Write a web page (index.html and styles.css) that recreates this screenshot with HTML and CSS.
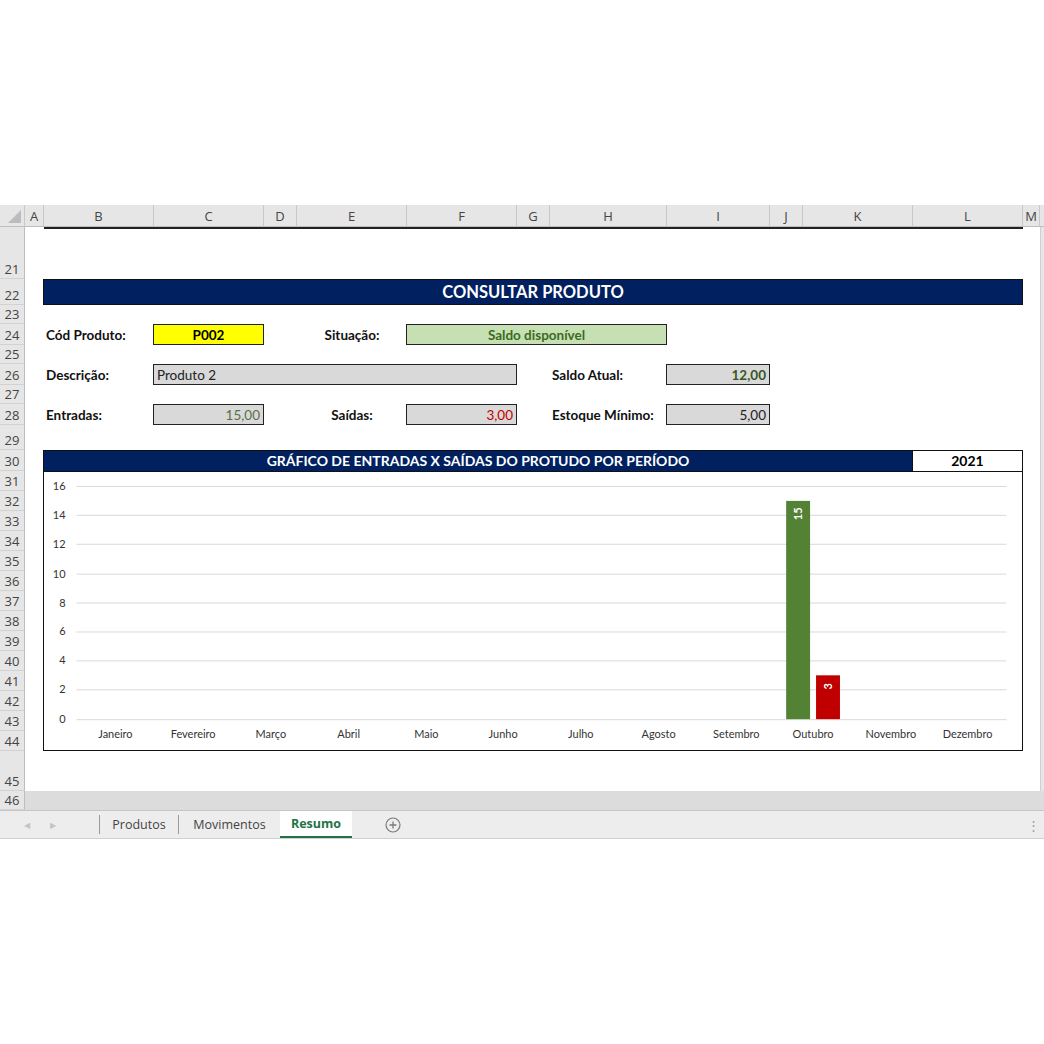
FILE: index.html
```html
<!DOCTYPE html>
<html lang="pt-BR">
<head>
    <meta charset="UTF-8">
    <title>Resumo - Controle de Estoque</title>
    <link rel="stylesheet" href="styles.css">
</head>
<body>

<div class="book">
    <div class="sheet">
        <div class="corner"><span class="corner-mark"></span></div>
        <div class="colhead">A</div>
        <div class="colhead">B</div>
        <div class="colhead">C</div>
        <div class="colhead">D</div>
        <div class="colhead">E</div>
        <div class="colhead">F</div>
        <div class="colhead">G</div>
        <div class="colhead">H</div>
        <div class="colhead">I</div>
        <div class="colhead">J</div>
        <div class="colhead">K</div>
        <div class="colhead">L</div>
        <div class="colhead">M</div>
        <div class="colhead scroll-end"></div>

        <div class="rowhead">21</div>
        <div class="rowhead">22</div>
        <div class="rowhead">23</div>
        <div class="rowhead">24</div>
        <div class="rowhead">25</div>
        <div class="rowhead">26</div>
        <div class="rowhead">27</div>
        <div class="rowhead">28</div>
        <div class="rowhead">29</div>
        <div class="rowhead">30</div>
        <div class="rowhead">31</div>
        <div class="rowhead">32</div>
        <div class="rowhead">33</div>
        <div class="rowhead">34</div>
        <div class="rowhead">35</div>
        <div class="rowhead">36</div>
        <div class="rowhead">37</div>
        <div class="rowhead">38</div>
        <div class="rowhead">39</div>
        <div class="rowhead">40</div>
        <div class="rowhead">41</div>
        <div class="rowhead">42</div>
        <div class="rowhead">43</div>
        <div class="rowhead">44</div>
        <div class="rowhead">45</div>
        <div class="rowhead">46</div>

        <!-- borda superior do bloco -->
        <div class="top-rule"></div>
        <div class="right-strip"></div>
        <div class="bottom-fill"></div>

        <div class="banner">CONSULTAR PRODUTO</div>

        <div class="label cod-label">Cód Produto:</div>
        <div class="field yellow cod-field">P002</div>
        <div class="label center situacao-label">Situação:</div>
        <div class="field status situacao-field">Saldo disponível</div>

        <div class="label desc-label">Descrição:</div>
        <div class="field left desc-field">Produto 2</div>
        <div class="label saldo-label">Saldo Atual:</div>
        <div class="field right saldo-field">12,00</div>

        <div class="label ent-label">Entradas:</div>
        <div class="field right ent-field">15,00</div>
        <div class="label center sai-label">Saídas:</div>
        <div class="field right sai-field">3,00</div>
        <div class="label min-label">Estoque Mínimo:</div>
        <div class="field right min-field">5,00</div>

        <div class="chart">
            <div class="chart-head">
                <div class="chart-title">GRÁFICO DE ENTRADAS X SAÍDAS DO PROTUDO POR PERÍODO</div>
                <div class="chart-year">2021</div>
            </div>
            <svg class="plot" width="978" height="279" viewBox="0 0 978 279">
                <g class="grid-lines">
                    <line x1="31" y1="14.5" x2="964" y2="14.5"/>
                    <line x1="31" y1="43.5" x2="964" y2="43.5"/>
                    <line x1="31" y1="72.5" x2="964" y2="72.5"/>
                    <line x1="31" y1="102.5" x2="964" y2="102.5"/>
                    <line x1="31" y1="131.5" x2="964" y2="131.5"/>
                    <line x1="31" y1="160.5" x2="964" y2="160.5"/>
                    <line x1="31" y1="189.5" x2="964" y2="189.5"/>
                    <line x1="31" y1="218.5" x2="964" y2="218.5"/>
                    <line x1="31" y1="248.5" x2="964" y2="248.5"/>
                </g>
                <g class="y-axis">
                    <text x="20" y="18">16</text>
                    <text x="20" y="47">14</text>
                    <text x="20" y="76">12</text>
                    <text x="20" y="106">10</text>
                    <text x="20" y="135">8</text>
                    <text x="20" y="164">6</text>
                    <text x="20" y="193">4</text>
                    <text x="20" y="222">2</text>
                    <text x="20" y="252">0</text>
                </g>
                <g class="x-axis">
                    <text x="70" y="267">Janeiro</text>
                    <text x="148" y="267">Fevereiro</text>
                    <text x="226" y="267">Março</text>
                    <text x="304" y="267">Abril</text>
                    <text x="382" y="267">Maio</text>
                    <text x="459" y="267">Junho</text>
                    <text x="537" y="267">Julho</text>
                    <text x="615" y="267">Agosto</text>
                    <text x="693" y="267">Setembro</text>
                    <text x="770" y="267">Outubro</text>
                    <text x="848" y="267">Novembro</text>
                    <text x="925" y="267">Dezembro</text>
                </g>
                <!-- Outubro: entradas 15, saídas 3 -->
                <rect class="bar-in" x="743" y="29" width="24" height="219"/>
                <rect class="bar-out" x="773" y="204" width="24" height="44"/>
                <text class="bar-label" transform="translate(759 42) rotate(-90)">15</text>
                <text class="bar-label" transform="translate(789 215) rotate(-90)">3</text>
            </svg>
        </div>
    </div>

    <div class="tabs">
        <div class="tab-nav">
            <span class="nav-arrow">&#9664;</span>
            <span class="nav-arrow">&#9654;</span>
        </div>
        <div class="tab tab-produtos">Produtos</div>
        <div class="tab tab-movimentos">Movimentos</div>
        <div class="tab active">Resumo</div>
        <div class="tab-add">
            <svg width="16" height="16" viewBox="0 0 16 16">
                <circle cx="8" cy="8" r="7" fill="none" stroke="#7a7a7a" stroke-width="1.2"/>
                <path d="M8 4.5v7M4.5 8h7" stroke="#7a7a7a" stroke-width="1.3"/>
            </svg>
        </div>
        <div class="tab-grip">&#8942;</div>
    </div>
</div>

</body>
</html>
```

FILE: styles.css
```css
body {
    margin: 0;
    background: white;
    font-family: Lato, "Open Sans", sans-serif;
}

.book {
    margin-top: 205px;
    width: 1044px;
}

.sheet {
    display: grid;
    grid-template-columns: 25px 19px 110px 110px 33px 110px 110px 33px 117px 103px 33px 110px 110px 17px 4px;
    grid-template-rows: 22px 52px 26px 19px 21px 19px 21px 19px 21px 25px 21px repeat(14, 20px) 40px 19px;
    background: white;
}

/* cabeçalhos de linha e coluna */
.corner {
    grid-column: 1;
    grid-row: 1;
    background: #e6e6e6;
    border-right: 1px solid #c8c8c8;
    border-bottom: 1px solid #bdbdbd;
    position: relative;
}

.corner-mark {
    position: absolute;
    right: 3px;
    bottom: 3px;
    width: 0;
    height: 0;
    border-left: 13px solid transparent;
    border-bottom: 13px solid #bcbcbc;
}

.colhead {
    grid-row: 1;
    background: #e6e6e6;
    border-right: 1px solid #c8c8c8;
    border-bottom: 1px solid #bdbdbd;
    font-family: "Open Sans", sans-serif;
    font-size: 13px;
    color: #444;
    display: flex;
    align-items: center;
    justify-content: center;
}

.scroll-end {
    border-right: none;
}

.rowhead {
    grid-column: 1;
    background: #e6e6e6;
    border-right: 1px solid #bdbdbd;
    border-bottom: 1px solid #d2d2d2;
    font-family: "Open Sans", sans-serif;
    font-size: 13px;
    line-height: 1;
    color: #444;
    display: flex;
    align-items: flex-end;
    justify-content: center;
    padding-bottom: 2px;
    box-sizing: border-box;
}

.top-rule {
    grid-column: 3 / 14;
    grid-row: 2;
    border-top: 2px solid #222;
}

.right-strip {
    grid-column: 15;
    grid-row: 2 / 27;
    background: #e6e6e6;
    border-left: 1px solid #cfcfcf;
}

.bottom-fill {
    grid-column: 2 / 16;
    grid-row: 27;
    background: #dcdcdc;
}

/* faixa do título */
.banner {
    grid-column: 3 / 14;
    grid-row: 3;
    margin-left: -1px;
    background: #002060;
    border: 1px solid #111;
    color: white;
    font-weight: bold;
    font-size: 16.5px;
    display: flex;
    align-items: center;
    justify-content: center;
}

/* rótulos e campos do formulário */
.label {
    font-weight: bold;
    font-size: 13.5px;
    color: #111;
    display: flex;
    align-items: center;
    padding-left: 2px;
    white-space: nowrap;
}

.label.center {
    justify-content: center;
    padding-left: 0;
}

.field {
    margin-left: -1px;
    background: #d9d9d9;
    border: 1px solid #222;
    font-size: 13.5px;
    display: flex;
    align-items: center;
    justify-content: center;
    padding: 0 3px;
    white-space: nowrap;
}

.field.left {
    justify-content: flex-start;
}

.field.right {
    justify-content: flex-end;
}

.field.yellow {
    background: #ffff00;
    font-weight: bold;
}

.field.status {
    background: #c6e0b4;
    color: #3b6b22;
    font-weight: bold;
}

.cod-label { grid-column: 3; grid-row: 5; }
.cod-field { grid-column: 4; grid-row: 5; }
.situacao-label { grid-column: 6; grid-row: 5; }
.situacao-field { grid-column: 7 / 10; grid-row: 5; }

.desc-label { grid-column: 3; grid-row: 7; }
.desc-field { grid-column: 4 / 8; grid-row: 7; color: #222; }
.saldo-label { grid-column: 9; grid-row: 7; }
.saldo-field { grid-column: 10; grid-row: 7; color: #375623; font-weight: bold; }

.ent-label { grid-column: 3; grid-row: 9; }
.ent-field { grid-column: 4; grid-row: 9; color: #5a7046; }
.sai-label { grid-column: 6; grid-row: 9; }
.sai-field { grid-column: 7; grid-row: 9; color: #c00000; }
.min-label { grid-column: 9; grid-row: 9; }
.min-field { grid-column: 10; grid-row: 9; color: #222; }

/* gráfico */
.chart {
    grid-column: 3 / 14;
    grid-row: 11 / 26;
    margin-left: -1px;
    border: 1px solid #111;
    display: flex;
    flex-direction: column;
    background: white;
}

.chart-head {
    display: flex;
    height: 20px;
    border-bottom: 1px solid #111;
}

.chart-title {
    width: 868px;
    background: #002060;
    border-right: 1px solid #111;
    color: white;
    font-weight: bold;
    font-size: 14px;
    display: flex;
    align-items: center;
    justify-content: center;
}

.chart-year {
    flex: 1;
    font-weight: bold;
    font-size: 14px;
    display: flex;
    align-items: center;
    justify-content: center;
}

.plot {
    display: block;
}

.grid-lines line {
    stroke: #d9d9d9;
    stroke-width: 1;
}

.y-axis text {
    font-family: Lato, sans-serif;
    font-size: 11px;
    fill: #333;
    text-anchor: end;
}

.x-axis text {
    font-family: Lato, sans-serif;
    font-size: 11px;
    fill: #333;
    text-anchor: middle;
}

.bar-in {
    fill: #548235;
}

.bar-out {
    fill: #c00000;
}

.bar-label {
    font-family: Lato, sans-serif;
    font-size: 11px;
    font-weight: bold;
    fill: white;
    text-anchor: middle;
}

/* abas das planilhas */
.tabs {
    display: flex;
    align-items: stretch;
    height: 27px;
    background: #ededed;
    border-top: 1px solid #c6c6c6;
    border-bottom: 1px solid #d0d0d0;
    font-family: "Open Sans", sans-serif;
    font-size: 12.5px;
    color: #444;
}

.tab-nav {
    width: 100px;
    display: flex;
    align-items: center;
    gap: 20px;
    padding-left: 24px;
    box-sizing: border-box;
    border-right: 1px solid #9a9a9a;
    margin: 4px 0;
}

.nav-arrow {
    font-size: 8px;
    color: #c4c4c4;
}

.tab {
    display: flex;
    align-items: center;
    justify-content: center;
    border-right: 1px solid #9a9a9a;
    margin: 4px 0;
    box-sizing: border-box;
}

.tab-produtos {
    width: 79px;
}

.tab-movimentos {
    width: 102px;
}

.tab.active {
    width: 72px;
    margin: 0 0 0 -1px;
    background: white;
    color: #217346;
    font-weight: bold;
    border-right: none;
    border-bottom: 2px solid #217346;
}

.tab-add {
    display: flex;
    align-items: center;
    margin-left: 33px;
}

.tab-grip {
    margin-left: auto;
    margin-right: 4px;
    display: flex;
    align-items: center;
    color: #a0a0a0;
    font-size: 13px;
}
```
